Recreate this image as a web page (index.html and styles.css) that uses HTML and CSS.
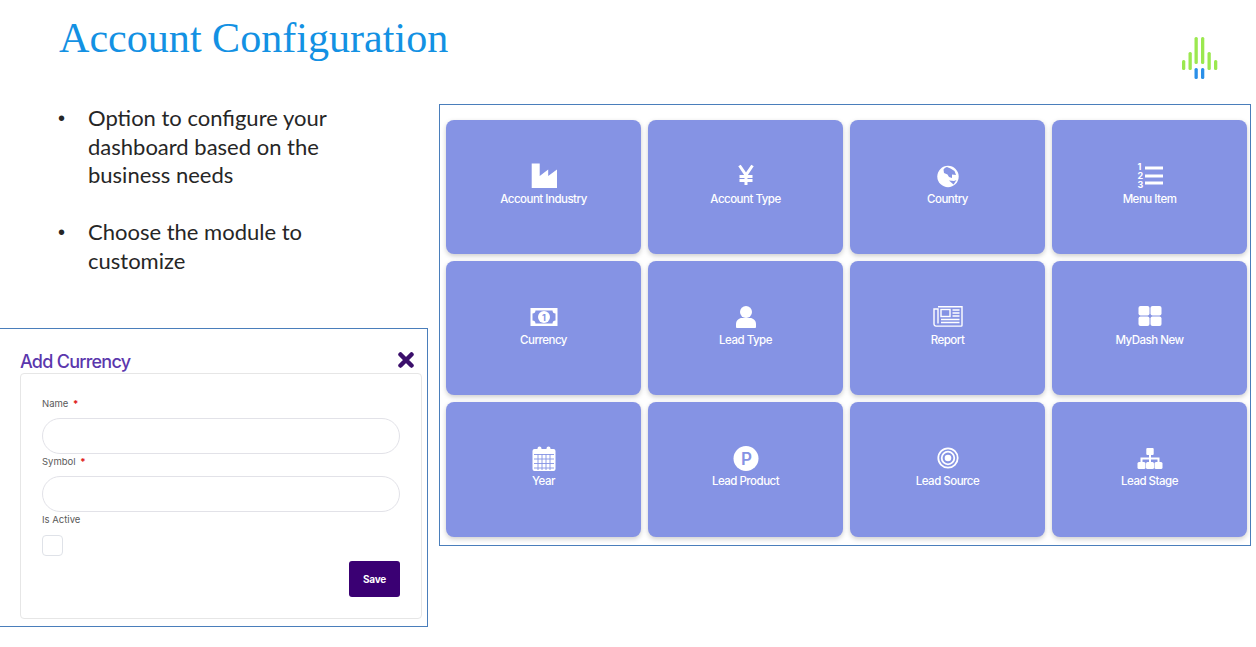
FILE: index.html
```html
<!DOCTYPE html>
<html>
<head>
    <meta charset="utf-8">
    <title>Account Configuration</title>
    <link rel="stylesheet" href="styles.css">
</head>
<body>
<div class="header">
    <h1>Account Configuration</h1>
    <svg class="logo" viewBox="0 0 37 42" width="37" height="42">
        <g fill="#9be84f">
            <rect x="1" y="23" width="3.300" height="10" rx="1.500"/>
            <rect x="7.500" y="15" width="3.300" height="18" rx="1.500"/>
            <rect x="13.500" y="0" width="3.300" height="27" rx="1.500"/>
            <rect x="20" y="0" width="3.300" height="27" rx="1.500"/>
            <rect x="26.500" y="15" width="3.300" height="18" rx="1.500"/>
            <rect x="33" y="23" width="3.300" height="10" rx="1.500"/>
        </g>
        <g fill="#2a8fe8">
            <rect x="13.500" y="31" width="3.300" height="11" rx="1.500"/>
            <rect x="20" y="31" width="3.300" height="11" rx="1.500"/>
        </g>
    </svg>
</div>
<div class="main">
    <div class="left">
        <ul class="points">
            <li>Option to configure your dashboard based on the business needs</li>
            <li>Choose the module to customize</li>
        </ul>
        <!-- currency form from the app -->
        <div class="form-shot">
            <div class="form-title">
                <span>Add Currency</span>
                <svg viewBox="0 0 16 16" width="16" height="16"><path d="M2.500 2.500L13.500 13.500M13.500 2.500L2.500 13.500" stroke="#3b0f6b" stroke-width="4.500" stroke-linecap="round"/></svg>
            </div>
            <form class="form-box">
                <label class="field-label">Name <b>*</b></label>
                <input class="field" type="text">
                <label class="field-label">Symbol <b>*</b></label>
                <input class="field" type="text">
                <label class="field-label">Is Active</label>
                <div class="check"></div>
                <div class="form-actions"><button type="button" class="save">Save</button></div>
            </form>
        </div>
    </div>
    <div class="panel">
        <div class="tiles">
            <div class="tile">
                <svg class="icon" viewBox="0 0 26 26"><path d="M.7.5h8v12.500l8.500-6.500V13l8.800-6.500V25H.7z"/></svg>
                <span>Account Industry</span>
            </div>
            <div class="tile">
                <svg class="icon" viewBox="0 0 26 26"><path d="M6.500 2.500l6.500 9.500 6.500-9.500M13 12v10M6.500 13.500h13M6.500 17.500h13" fill="none" stroke="#fff" stroke-width="3"/></svg>
                <span>Account Type</span>
            </div>
            <div class="tile">
                <svg class="icon" viewBox="0 0 26 26"><circle cx="13" cy="13.500" r="10.700"/><path class="cut" d="M8.500 6.500c1-1.500 2.500-2.500 3.500-2.500l3.500 1.500 4 2.500 1.500 4-4-.5v3.500l-3-1-1.500-2.500-3.500-1.500zM14 17.500l5 .5 2.500-1-3 4.500z"/></svg>
                <span>Country</span>
            </div>
            <div class="tile">
                <svg class="icon" viewBox="0 0 26 26">
                    <text x="0.500" y="7.300" class="num">1</text>
                    <text x="0.500" y="16.300" class="num">2</text>
                    <text x="0.500" y="25.300" class="num">3</text>
                    <rect x="8" y="3.500" width="18" height="3"/>
                    <rect x="8" y="11.500" width="18" height="3"/>
                    <rect x="8" y="18.500" width="18" height="3"/>
                </svg>
                <span>Menu Item</span>
            </div>
            <div class="tile">
                <svg class="icon icon-wide" viewBox="0 0 28 26"><path fill-rule="evenodd" d="M.5 4h27v18H.5zM5.500 6.500c0 1.800-1.200 3-3 3v7c1.800 0 3 1.200 3 3h17c0-1.800 1.200-3 3-3v-7c-1.800 0-3-1.200-3-3z"/><circle cx="14" cy="13" r="6"/><text x="14" y="16.500" class="cut-num">1</text></svg>
                <span>Currency</span>
            </div>
            <div class="tile">
                <svg class="icon" viewBox="0 0 26 26"><circle cx="13" cy="8" r="6"/><path d="M3 23v-3c0-3.500 3-6 6-6h8c3 0 6 2.500 6 6v3c0 .5-.5 1-1 1H4c-.5 0-1-.5-1-1z"/></svg>
                <span>Lead Type</span>
            </div>
            <div class="tile">
                <svg class="icon icon-news" viewBox="0 0 30 26"><path class="line" d="M5 2.700h24v18.600a.8.8 0 0 1-.8.8H3a2 2 0 0 1-2-2V5h4v14.500"/><rect class="line" x="8" y="5.500" width="9" height="7"/><path class="line" d="M19.500 6h7M19.500 9h7M19.500 12h7M8 15.500h18.500M8 18.500h18.500"/></svg>
                <span>Report</span>
            </div>
            <div class="tile">
                <svg class="icon" viewBox="0 0 26 26"><rect x="1.500" y="2" width="11" height="9.500" rx="2"/><rect x="13.500" y="2" width="11" height="9.500" rx="2"/><rect x="1.500" y="12.500" width="11" height="9.500" rx="2"/><rect x="13.500" y="12.500" width="11" height="9.500" rx="2"/></svg>
                <span>MyDash New</span>
            </div>
            <div class="tile">
                <svg class="icon" viewBox="0 0 26 26"><path d="M1.500 6a2 2 0 0 1 2-2h3V3.500a1.500 1.500 0 0 1 4 0V4h5v-.5a1.500 1.500 0 0 1 4 0V4h3a2 2 0 0 1 2 2v18a2 2 0 0 1-2 2h-19a2 2 0 0 1-2-2z"/><path class="grid" d="M3 9.500h20M3 14h20M3 18.500h20M3 23h20M7 9v16M11 9v16M15 9v16M19 9v16"/></svg>
                <span>Year</span>
            </div>
            <div class="tile">
                <svg class="icon" viewBox="0 0 26 26"><circle cx="13" cy="13.500" r="12.500"/><text x="13.500" y="19.500" class="cut-p">P</text></svg>
                <span>Lead Product</span>
            </div>
            <div class="tile">
                <svg class="icon" viewBox="0 0 26 26"><circle cx="13" cy="13" r="9.700" class="ring"/><circle cx="13" cy="13" r="6.300" class="ring"/><circle cx="13" cy="13" r="3.300"/></svg>
                <span>Lead Source</span>
            </div>
            <div class="tile">
                <svg class="icon" viewBox="0 0 26 26"><rect x="9.300" y="3" width="7.400" height="7" rx="1"/><path d="M12 9h2v3.500h8.500v5h-2v-3H14v3h-2v-3H5.500v3h-2v-5H12z"/><rect x="0.500" y="17" width="8" height="7" rx="1.500"/><rect x="9" y="17" width="8" height="7" rx="1.500"/><rect x="17.500" y="17" width="8" height="7" rx="1.500"/></svg>
                <span>Lead Stage</span>
            </div>
        </div>
    </div>
</div>
</body>
</html>
```

FILE: styles.css
```css
body {
    margin: 0;
    background: white;
    font-family: "Inter", sans-serif;
}
.header {
    display: flex;
    justify-content: space-between;
    align-items: flex-start;
    height: 104px;
    padding: 0 38px 0 59px;
}
h1 {
    margin: 15px 0 0;
    font-family: "Liberation Serif", serif;
    font-size: 42.100px;
    font-weight: normal;
    line-height: 46px;
    color: #1391e3;
}
.logo {
    margin-top: 37px;
}
.main {
    display: flex;
    align-items: flex-start;
    gap: 11px;
}
.left {
    width: 428px;
    flex: none;
}
.points {
    list-style: none;
    margin: 0;
    padding: 0 0 0 58px;
    height: 224px;
    box-sizing: border-box;
    width: 330px;
    font-family: "Lato", sans-serif;
    font-size: 22px;
    line-height: 28.700px;
    color: #262626;
}
.points li {
    display: flex;
    margin-bottom: 28px;
}
.points li::before {
    content: "•";
    flex: none;
    width: 30px;
    font-size: 20px;
    font-family: "Liberation Sans", sans-serif;
}
.form-shot {
    height: 299px;
    box-sizing: border-box;
    border: 1px solid #4a7ebb;
    border-left: none;
    padding: 20px 5px 0 20px;
}
.form-title {
    display: flex;
    justify-content: space-between;
    align-items: center;
    height: 24px;
    font-size: 18px;
    font-weight: 500;
    letter-spacing: -0.75px;
    color: #5b37ad;
    padding-right: 8px;
}
.form-title svg {
    margin-top: -3px;
}
.form-box {
    height: 246px;
    box-sizing: border-box;
    border: 1px solid #e6e6e6;
    border-radius: 4px;
    padding: 22px 21px 0;
}
.field-label {
    display: block;
    font-size: 9.500px;
    line-height: 15px;
    color: #5a5a5a;
}
.field-label b {
    color: #e02020;
    margin-left: 2px;
}
.field {
    display: block;
    width: 100%;
    height: 36px;
    box-sizing: border-box;
    margin: 7px 0 0;
    border: 1px solid #e2e2e8;
    border-radius: 18px;
    background: white;
}
.check {
    width: 21px;
    height: 21px;
    margin-top: 8px;
    box-sizing: border-box;
    border: 1px solid #dfe2e8;
    border-radius: 4px;
}
.form-actions {
    display: flex;
    justify-content: flex-end;
    margin-top: 5px;
}
.save {
    width: 51px;
    height: 36px;
    border: none;
    border-radius: 3px;
    background: #3a0073;
    color: white;
    font-family: "Inter", sans-serif;
    font-size: 10px;
    font-weight: 700;
    letter-spacing: -0.3px;
}
.panel {
    width: 812px;
    height: 442px;
    box-sizing: border-box;
    border: 1px solid #4a7ebb;
    padding: 15px 3px 0 6px;
}
.tiles {
    display: grid;
    grid-template-columns: repeat(4, 195px);
    grid-template-rows: 134px 134px 135px;
    gap: 7px;
}
.tile {
    display: flex;
    flex-direction: column;
    align-items: center;
    padding-top: 43px;
    box-sizing: border-box;
    background: #8593e4;
    border-radius: 8px;
    box-shadow: 0 2px 5px rgba(0,0,0,0.2);
    color: white;
    font-size: 11.500px;
    font-weight: 500;
    letter-spacing: -0.5px;
    line-height: 16px;
}
.icon {
    width: 26px;
    height: 26px;
    margin-bottom: 2px;
    fill: white;
    overflow: visible;
}
.icon-wide {
    width: 28px;
}
.icon-news {
    width: 30px;
}
.cut {
    fill: #8593e4;
}
.num {
    font-family: "Inter", sans-serif;
    font-size: 9px;
    font-weight: 700;
    letter-spacing: 0;
}
.cut-num {
    fill: #8593e4;
    font-size: 9px;
    font-weight: 700;
    text-anchor: middle;
    letter-spacing: 0;
}
.cut-p {
    fill: #8593e4;
    font-size: 17px;
    font-weight: 600;
    text-anchor: middle;
    letter-spacing: 0;
}
.line {
    fill: none;
    stroke: white;
    stroke-width: 1.400;
}
.ring {
    fill: none;
    stroke: white;
    stroke-width: 1.800;
}
.grid {
    fill: none;
    stroke: #8593e4;
    stroke-width: 0.900;
}
```
